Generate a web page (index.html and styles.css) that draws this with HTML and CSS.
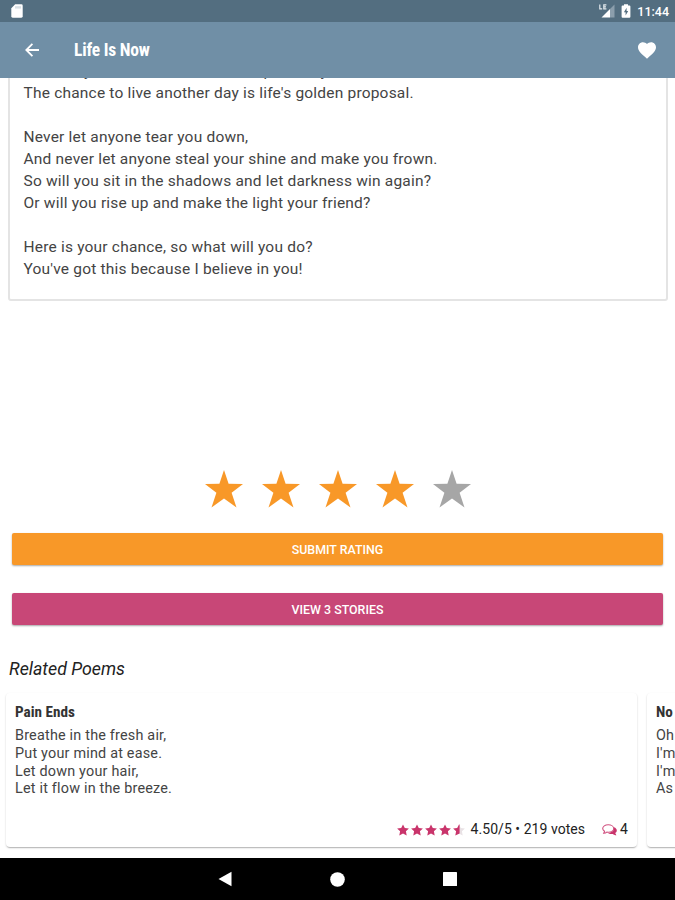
FILE: index.html
```html
<!DOCTYPE html>
<html lang="en">
<head>
    <meta charset="UTF-8">
    <meta name="viewport" content="width=device-width, initial-scale=1.0">
    <title>Life Is Now</title>
    <link rel="stylesheet" href="styles.css">
</head>
<body>
<svg class="defs" width="0" height="0">
    <symbol id="star" viewBox="0 0 38 38">
        <path d="M19 0 L23.6 13.8 L38 14 L26.6 22.8 L31.5 37.5 L19 28.4 L6.5 37.5 L11.4 22.8 L0 14 L14.4 13.8 Z"/>
    </symbol>
    <symbol id="small-star" viewBox="0 0 12 12">
        <path d="M6 0.4 L7.8 4.1 L11.9 4.6 L8.9 7.3 L9.7 11.5 L6 9.5 L2.3 11.5 L3.1 7.3 L0.1 4.6 L4.2 4.1 Z"/>
    </symbol>
</svg>

<div class="status-bar">
    <svg class="sd-card" width="12" height="14" viewBox="0 0 12 14">
        <path fill="#fff" d="M4.2 0.3 H10.3 Q11.7 0.3 11.7 1.7 V12.3 Q11.7 13.7 10.3 13.7 H1.7 Q0.3 13.7 0.3 12.3 V4.2 Z"/>
        <path stroke="#b4c2cc" stroke-width="1" d="M5 2.2 V4.6 M7 2.2 V4.6 M9 2.2 V4.6"/>
    </svg>
    <div class="status-icons">
        <svg width="16" height="14" viewBox="0 0 16 14">
            <path fill="#8b9eac" d="M11 5 L15.5 0.5 V13.5 H11 Z"/>
            <path fill="#fff" d="M11 5 V13.5 H2.5 Z"/>
            <path fill="none" stroke="#e3e9ed" stroke-width="1.2" d="M0.8 0.5 V4.9 H3.2 M7.4 0.8 H4.8 V4.9 H7.4 M4.8 2.8 H7"/>
        </svg>
        <svg class="battery" width="10" height="14" viewBox="0 0 10 14">
            <path fill="#fff" d="M3 0.3 H7 V1.6 H8.4 Q9.4 1.6 9.4 2.6 V12.7 Q9.4 13.7 8.4 13.7 H1.6 Q0.6 13.7 0.6 12.7 V2.6 Q0.6 1.6 1.6 1.6 H3 Z"/>
            <path fill="#536e80" d="M5.6 3.8 L2.9 8.2 H4.6 V11.6 L7.2 7 H5.6 Z"/>
        </svg>
        <span>11:44</span>
    </div>
</div>

<div class="app-bar">
    <svg class="back" width="14" height="14" viewBox="0 0 14 14">
        <path fill="none" stroke="#fff" stroke-width="1.8" d="M14 7 H1.6 M7.4 0.8 L1.3 7 L7.4 13.2"/>
    </svg>
    <h1>Life Is Now</h1>
    <svg class="heart" width="18" height="17" viewBox="2 3 20 18.35">
        <path fill="#fff" d="M12 21.35l-1.45-1.32C5.4 15.36 2 12.28 2 8.5 2 5.42 4.42 3 7.5 3c1.74 0 3.41.81 4.5 2.09C13.09 3.81 14.76 3 16.5 3 19.58 3 22 5.42 22 8.5c0 3.78-3.4 6.86-8.55 11.54L12 21.35z"/>
    </svg>
</div>

<div class="content">
    <div class="poem">
        <p>Life is my moment to be here and prove my will.<br>
        The chance to live another day is life's golden proposal.</p>
        <p>Never let anyone tear you down,<br>
        And never let anyone steal your shine and make you frown.<br>
        So will you sit in the shadows and let darkness win again?<br>
        Or will you rise up and make the light your friend?</p>
        <p>Here is your chance, so what will you do?<br>
        You've got this because I believe in you!</p>
    </div>

    <div class="rating">
        <svg class="on"><use href="#star"/></svg>
        <svg class="on"><use href="#star"/></svg>
        <svg class="on"><use href="#star"/></svg>
        <svg class="on"><use href="#star"/></svg>
        <svg><use href="#star"/></svg>
    </div>

    <button class="submit">SUBMIT RATING</button>
    <button class="stories">VIEW 3 STORIES</button>

    <h2>Related Poems</h2>
    <div class="related">
        <div class="card">
            <h3>Pain Ends</h3>
            <p>Breathe in the fresh air,<br>Put your mind at ease.<br>Let down your hair,<br>Let it flow in the breeze.</p>
            <div class="meta">
                <div class="small-stars">
                    <svg><use href="#small-star"/></svg>
                    <svg><use href="#small-star"/></svg>
                    <svg><use href="#small-star"/></svg>
                    <svg><use href="#small-star"/></svg>
                    <svg viewBox="0 0 12 12">
                        <path fill="#e9e2e5" d="M6 0.4 L7.8 4.1 L11.9 4.6 L8.9 7.3 L9.7 11.5 L6 9.5 Z"/>
                        <path d="M6.6 0.6 L6 0.4 L4.2 4.1 L0.1 4.6 L3.1 7.3 L2.3 11.5 L6.6 9.5 Z"/>
                    </svg>
                </div>
                <span class="votes">4.50/5 • 219 votes</span>
                <svg class="comments" width="15" height="12" viewBox="0 0 15 12">
                    <path fill="#c9346b" d="M12 3.2 C15.4 4.4 15.6 7.6 13.2 9 L14.4 11.3 C12.6 11.2 11.6 10.7 10.8 10 C8.6 10.3 6.8 9.8 5.6 8.8 C9.6 8.8 12.6 6.6 12 3.2 Z"/>
                    <path fill="#fff" stroke="#d0507f" stroke-width="1.1" d="M6.2 0.8 C9.3 0.8 11.7 2.4 11.7 4.5 C11.7 6.6 9.3 8.2 6.2 8.2 L4.8 8.1 C4 8.8 3 9.2 1.7 9.3 L2.6 7.3 C1.3 6.6 0.7 5.6 0.7 4.5 C0.7 2.4 3.1 0.8 6.2 0.8 Z"/>
                </svg>
                <span>4</span>
            </div>
        </div>
        <div class="card">
            <h3>No</h3>
            <p>Oh<br>I'm<br>I'm<br>As</p>
        </div>
    </div>
</div>

<div class="nav-bar">
    <svg width="14" height="16" viewBox="0 0 14 16"><path fill="#fff" d="M13.5 0.8 V15.2 L0.5 8 Z"/></svg>
    <svg width="15" height="15" viewBox="0 0 15 15"><circle fill="#fff" cx="7.5" cy="7.5" r="7.3"/></svg>
    <svg width="14" height="14" viewBox="0 0 14 14"><rect fill="#fff" width="14" height="14" rx="0.6"/></svg>
</div>
</body>
</html>
```
FILE: styles.css
```css
* {
    box-sizing: border-box;
}

body {
    margin: 0;
    height: 900px;
    display: flex;
    flex-direction: column;
    overflow: hidden;
    background: #fff;
    color: #444;
    font-family: Roboto, sans-serif;
}

h1, h2, h3, p {
    margin: 0;
}

svg {
    display: block;
    flex: none;
}

.defs {
    position: absolute;
}

.status-bar {
    flex: none;
    height: 22px;
    padding: 0 6px 0 11px;
    display: flex;
    align-items: center;
    justify-content: space-between;
    background: #536e80;
    color: #fff;
    font-size: 12.5px;
    font-weight: 500;
}

.status-icons {
    display: flex;
    align-items: center;
}

.battery {
    margin: 0 6px;
}

.app-bar {
    flex: none;
    height: 56px;
    padding: 0 19px 0 25px;
    display: flex;
    align-items: center;
    background: #708fa6;
    color: #fff;
}

.app-bar h1 {
    margin-left: 35px;
    flex: 1;
    font-family: "Roboto Condensed", Roboto, sans-serif;
    font-size: 17.5px;
    font-weight: 700;
    font-stretch: 75%;
    letter-spacing: -0.2px;
}

.content {
    flex: 1;
    min-height: 0;
    overflow: hidden;
}

.poem {
    height: 244px;
    margin: -21px 7px 0 8px;
    padding: 1px 13.5px 0;
    border: 2px solid #e4e4e4;
    border-radius: 3px;
    font-size: 15.5px;
    letter-spacing: 0.2px;
    line-height: 22px;
}

.poem p {
    margin-bottom: 22px;
}

.rating {
    display: flex;
    justify-content: center;
    gap: 19px;
    margin: 169px 0 25px;
    fill: #a6a6a6;
}

.rating svg {
    width: 38px;
    height: 38px;
}

.rating .on {
    fill: #f89828;
}

button {
    display: block;
    width: 651px;
    height: 32px;
    margin: 0 12px 28px;
    padding: 1px 0 0;
    border: none;
    border-radius: 2px;
    box-shadow: 0 1px 2px rgba(0,0,0,0.35);
    color: #fff;
    font-family: Roboto, sans-serif;
    font-size: 12.4px;
    font-weight: 500;
}

.submit {
    background: #f89828;
}

.stories {
    background: #c84777;
}

h2 {
    margin: 32px 0 0 9px;
    color: #222;
    font-size: 17.8px;
    font-weight: 400;
    font-style: italic;
    line-height: 24px;
}

.related {
    display: flex;
    gap: 10px;
    margin: 12px 0 0 6px;
}

.card {
    flex: none;
    width: 631px;
    height: 154px;
    padding: 9px 9px 0;
    display: flex;
    flex-direction: column;
    border-radius: 4px;
    box-shadow: 0 2px 1px -1px rgba(0,0,0,0.14), 0 1px 2px rgba(0,0,0,0.2);
    font-size: 14.4px;
    letter-spacing: 0.2px;
    line-height: 17.8px;
}

.card h3 {
    margin-bottom: 5px;
    color: #333;
    font-family: "Roboto Condensed", Roboto, sans-serif;
    font-size: 15.2px;
    font-weight: 700;
    font-stretch: 75%;
    letter-spacing: 0;
    line-height: 20px;
}

.meta {
    display: flex;
    align-items: center;
    justify-content: flex-end;
    margin-top: 23px;
    color: #222;
    font-size: 14px;
    letter-spacing: 0.05px;
}

.small-stars {
    display: flex;
    gap: 2px;
    fill: #c9346b;
}

.small-stars svg {
    width: 12px;
    height: 12px;
}

.votes {
    margin: 0 17px 0 6px;
}

.comments {
    margin-right: 3px;
}

.nav-bar {
    flex: none;
    height: 42px;
    display: flex;
    align-items: center;
    justify-content: center;
    gap: 98px;
    background: #000;
}
```
